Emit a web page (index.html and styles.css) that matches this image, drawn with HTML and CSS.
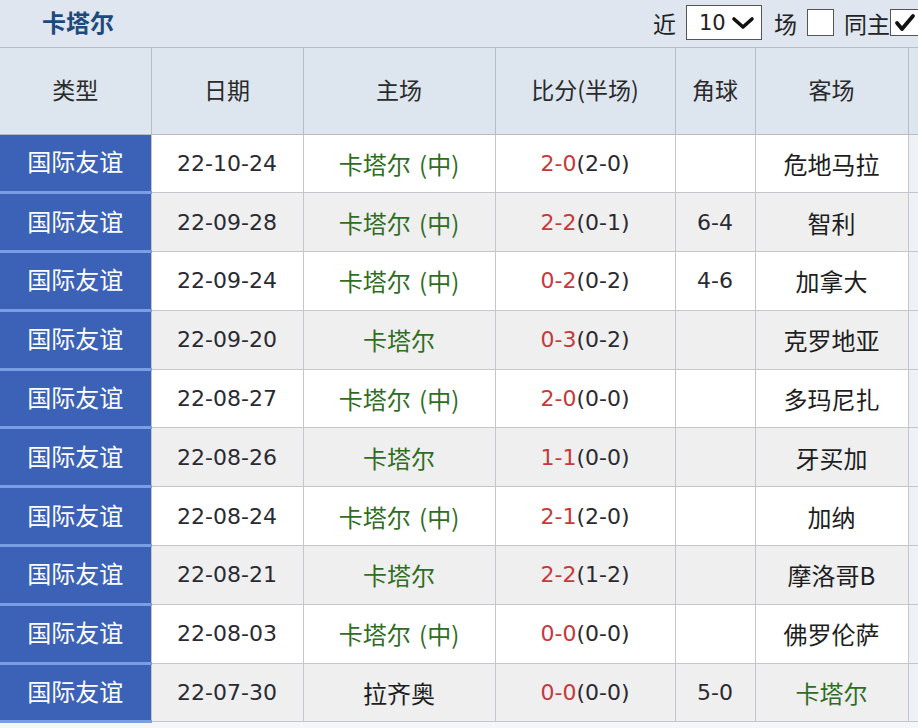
FILE: index.html
```html
<!DOCTYPE html>
<html lang="zh">
<head>
<meta charset="utf-8">
<link rel="stylesheet" href="styles.css">
</head>
<body>
<div class="page">
  <div class="topbar">
    <div class="title">卡塔尔</div>
    <div class="controls">
      <span class="lbl">近</span>
      <div class="select"><span class="num">10</span>
        <svg width="24" height="16" viewBox="0 0 24 16"><path d="M3 4 L12 12 L21 4" fill="none" stroke="#111" stroke-width="3.6" stroke-linecap="round" stroke-linejoin="round"/></svg>
      </div>
      <span class="lbl">场</span>
      <span class="box"></span>
      <span class="lbl lbl2">同主</span>
      <span class="box checked"><svg width="26" height="22" viewBox="0 0 26 22"><path d="M5 11 L10 17 L21 4" fill="none" stroke="#111" stroke-width="3.8" stroke-linecap="round" stroke-linejoin="round"/></svg></span>
    </div>
  </div>
  <table class="grid">
    <colgroup>
      <col class="c1"><col class="c2"><col class="c3"><col class="c4"><col class="c5"><col class="c6"><col class="c7">
    </colgroup>
    <thead>
      <tr><th class="first">类型</th><th>日期</th><th>主场</th><th>比分(半场)</th><th>角球</th><th>客场</th><th class="edge"></th></tr>
    </thead>
    <tbody>
      <tr><td class="type">国际友谊</td><td class="num">22-10-24</td><td class="team home">卡塔尔 (中)</td><td class="num"><span class="red">2-0</span>(2-0)</td><td class="num"></td><td class="team">危地马拉</td><td class="edge"></td></tr>
      <tr><td class="type">国际友谊</td><td class="num">22-09-28</td><td class="team home">卡塔尔 (中)</td><td class="num"><span class="red">2-2</span>(0-1)</td><td class="num">6-4</td><td class="team">智利</td><td class="edge"></td></tr>
      <tr><td class="type">国际友谊</td><td class="num">22-09-24</td><td class="team home">卡塔尔 (中)</td><td class="num"><span class="red">0-2</span>(0-2)</td><td class="num">4-6</td><td class="team">加拿大</td><td class="edge"></td></tr>
      <tr><td class="type">国际友谊</td><td class="num">22-09-20</td><td class="team home">卡塔尔</td><td class="num"><span class="red">0-3</span>(0-2)</td><td class="num"></td><td class="team">克罗地亚</td><td class="edge"></td></tr>
      <tr><td class="type">国际友谊</td><td class="num">22-08-27</td><td class="team home">卡塔尔 (中)</td><td class="num"><span class="red">2-0</span>(0-0)</td><td class="num"></td><td class="team">多玛尼扎</td><td class="edge"></td></tr>
      <tr><td class="type">国际友谊</td><td class="num">22-08-26</td><td class="team home">卡塔尔</td><td class="num"><span class="red">1-1</span>(0-0)</td><td class="num"></td><td class="team">牙买加</td><td class="edge"></td></tr>
      <tr><td class="type">国际友谊</td><td class="num">22-08-24</td><td class="team home">卡塔尔 (中)</td><td class="num"><span class="red">2-1</span>(2-0)</td><td class="num"></td><td class="team">加纳</td><td class="edge"></td></tr>
      <tr><td class="type">国际友谊</td><td class="num">22-08-21</td><td class="team home">卡塔尔</td><td class="num"><span class="red">2-2</span>(1-2)</td><td class="num"></td><td class="team">摩洛哥B</td><td class="edge"></td></tr>
      <tr><td class="type">国际友谊</td><td class="num">22-08-03</td><td class="team home">卡塔尔 (中)</td><td class="num"><span class="red">0-0</span>(0-0)</td><td class="num"></td><td class="team">佛罗伦萨</td><td class="edge"></td></tr>
      <tr><td class="type">国际友谊</td><td class="num">22-07-30</td><td class="team">拉齐奥</td><td class="num"><span class="red">0-0</span>(0-0)</td><td class="num">5-0</td><td class="team home">卡塔尔</td><td class="edge"></td></tr>
    </tbody>
  </table>
</div>
</body>
</html>
```

FILE: styles.css
```css
* { box-sizing: border-box; }
html, body { margin: 0; padding: 0; background: #f4f6f9; }
body { font-family: "DejaVu Sans", "Noto Sans CJK SC", sans-serif; color: #222; }
.page { width: 918px; height: 728px; overflow: hidden; background: #f4f6f9; }

.topbar {
  height: 48px;
  background: #dfe6ef;
  display: flex;
  align-items: center;
  justify-content: space-between;
  border-bottom: 1px solid #b9bec6;
}
.title {
  padding-left: 42px;
  font-family: "Noto Sans CJK SC", sans-serif;
  font-weight: 700;
  font-size: 24px;
  color: #1d4a7e;
  margin-top: -4px;
}
.controls {
  display: flex;
  align-items: center;
  margin-right: -2px;
  margin-top: -2px;
}
.lbl {
  font-family: "Noto Sans CJK SC", sans-serif;
  font-size: 23px;
  color: #222;
  margin: 0 10px 0 0;
}
.lbl2 { margin: 0 0 0 10px; }
.select {
  width: 76px;
  height: 35px;
  background: #fff;
  border: 1px solid #555;
  display: flex;
  align-items: center;
  justify-content: space-between;
  padding: 0 6px 0 12px;
  margin-right: 12px;
}
.select .num { font-family: "DejaVu Sans", sans-serif; font-size: 21px; color: #222; }
.box {
  width: 27px;
  height: 27px;
  background: #fff;
  border: 1px solid #555;
  display: flex;
  align-items: center;
  justify-content: center;
}
.box.checked { width: 30px; }

.grid {
  border-collapse: collapse;
  table-layout: fixed;
  width: 918px;
}
.c1 { width: 151px; }
.c2 { width: 152px; }
.c3 { width: 192px; }
.c4 { width: 180px; }
.c5 { width: 80px; }
.c6 { width: 153px; }
.c7 { width: 10px; }

.grid th {
  height: 86px;
  background: #dde5ef;
  border: 1px solid #b8bdc5;
  border-top: none;
  font-family: "Noto Sans CJK SC", sans-serif;
  font-weight: 400;
  font-size: 23px;
  color: #2a2a2a;
  text-align: center;
  vertical-align: middle;
  padding: 0 0 4px 0;
}
.grid th.first { border-left: none; }
.grid td {
  height: 58.8px;
  border: 1px solid #c3c6cc;
  text-align: center;
  vertical-align: middle;
  padding: 0;
  background: #fff;
  white-space: nowrap;
}
.grid tbody tr:nth-child(even) td { background: #efefef; }
.grid td.type, .grid tbody tr:nth-child(even) td.type {
  background: #3c62b8;
  color: #fff;
  font-family: "Noto Sans CJK SC", sans-serif;
  font-size: 24px;
  border: none;
  border-bottom: 3px solid #7a9ee3;
  border-right: 1px solid #c3c6cc;
  padding-bottom: 4px;
}
.grid td.num { font-size: 22px; color: #2a2a33; }
.grid td.team { font-family: "Noto Sans CJK SC", sans-serif; font-size: 24px; color: #1e1e1e; word-spacing: 3px; }
.grid td.home { color: #2f6e22; }
.red { color: #c53a3a; }
.grid .edge, .grid tbody tr:nth-child(even) td.edge { background: #eef1f5; border-right: none; }
.grid th.edge { background: #dde5ef; }
```
